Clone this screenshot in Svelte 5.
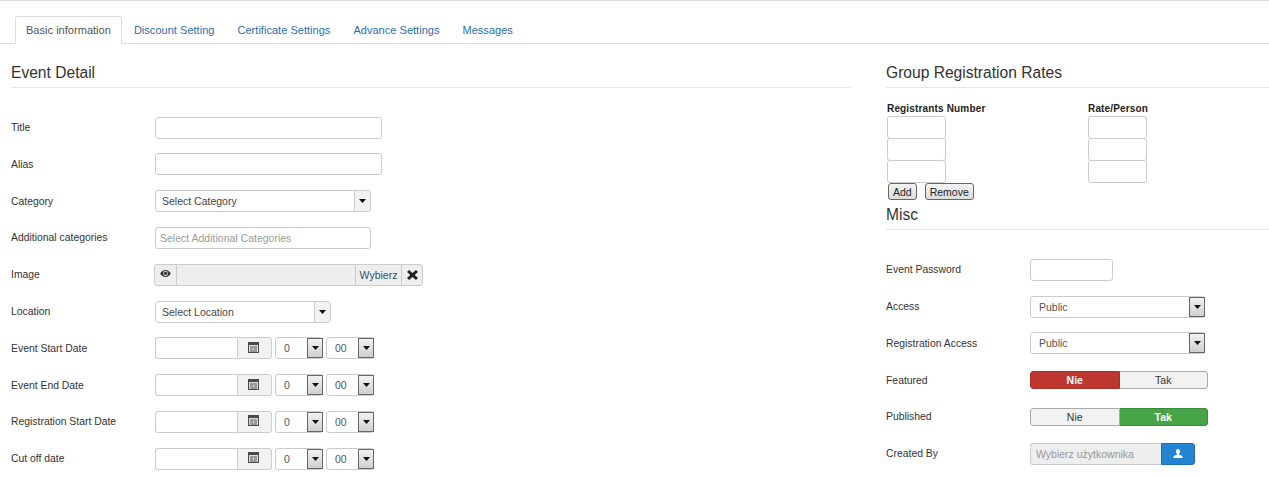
<script>
	const tabs = ["Basic information", "Discount Setting", "Certificate Settings", "Advance Settings", "Messages"];
	const dateRows = ["Event Start Date", "Event End Date", "Registration Start Date", "Cut off date"];
</script>

{#snippet arrow()}
	<svg class="caret" width="7" height="4" viewBox="0 0 7 4"><path d="M0 0h7L3.500 4z" fill="#111" /></svg>
{/snippet}

<div class="page">
	<ul class="tabs">
		{#each tabs as tab, i}
			<li class="tab" class:active={i === 0}>{tab}</li>
		{/each}
	</ul>

	<div class="columns">
		<section class="left">
			<h3>Event Detail</h3>
			<div class="form">
				<div class="row">
					<span class="label">Title</span>
					<input class="text w227" />
				</div>
				<div class="row">
					<span class="label">Alias</span>
					<input class="text w227" />
				</div>
				<div class="row">
					<span class="label">Category</span>
					<div class="combo w216">
						<span class="combo-text">Select Category</span>
						<span class="combo-btn">{@render arrow()}</span>
					</div>
				</div>
				<div class="row">
					<span class="label">Additional categories</span>
					<div class="tags w216">Select Additional Categories</div>
				</div>
				<div class="row">
					<span class="label">Image</span>
					<div class="media">
						<span class="add-on eye">
							<svg width="11" height="7" viewBox="0 0 12 8"><path fill="#333" fill-rule="evenodd" d="M6 0C3.400 0 1.300 1.500 0 4c1.300 2.500 3.400 4 6 4s4.700-1.500 6-4C10.700 1.500 8.600 0 6 0zm0 1.200a2.800 2.800 0 1 1 0 5.600 2.800 2.800 0 0 1 0-5.600z" /><circle cx="6" cy="3.800" r="1.900" fill="#333" /></svg>
						</span>
						<span class="media-path"></span>
						<span class="add-on pick">Wybierz</span>
						<span class="add-on clear">
							<svg width="11" height="10" viewBox="0 0 12 11"><path fill="#222" d="M0 2.200 2.200 0 6 3.300 9.800 0 12 2.200 8.500 5.500 12 8.800 9.800 11 6 7.700 2.200 11 0 8.800 3.500 5.500z" /></svg>
						</span>
					</div>
				</div>
				<div class="row">
					<span class="label">Location</span>
					<div class="combo w176">
						<span class="combo-text">Select Location</span>
						<span class="combo-btn">{@render arrow()}</span>
					</div>
				</div>
				{#each dateRows as name}
					<div class="row">
						<span class="label">{name}</span>
						<div class="date">
							<input class="date-input" />
							<span class="date-btn">
								<svg class="cal" width="11" height="11" viewBox="0 0 11 11"><rect width="11" height="11" fill="#4a4a4a" /><rect x="1" y="3" width="9" height="7" fill="#ddd" /><path d="M2 5h7M2 7h3M6 7h3M2 9h7" stroke="#555" /></svg>
							</span>
						</div>
						<div class="mini hour">
							<span class="mini-text">0</span>
							<span class="native">{@render arrow()}</span>
						</div>
						<div class="mini minute">
							<span class="mini-text">00</span>
							<span class="native">{@render arrow()}</span>
						</div>
					</div>
				{/each}
			</div>
		</section>

		<section class="right">
			<h3>Group Registration Rates</h3>
			<div class="rates">
				<div class="rate-col first">
					<b>Registrants Number</b>
					<input class="rate" /><input class="rate" /><input class="rate" />
					<div class="rate-actions">
						<button class="plain">Add</button>
						<button class="plain">Remove</button>
					</div>
				</div>
				<div class="rate-col">
					<b>Rate/Person</b>
					<input class="rate" /><input class="rate" /><input class="rate" />
				</div>
			</div>
			<h3 class="misc">Misc</h3>
			<div class="misc-form">
				<div class="row">
					<span class="label side">Event Password</span>
					<input class="text w83" />
				</div>
				<div class="row">
					<span class="label side">Access</span>
					<div class="select-box">
						<span class="mini-text">Public</span>
						<span class="native">{@render arrow()}</span>
					</div>
				</div>
				<div class="row">
					<span class="label side">Registration Access</span>
					<div class="select-box">
						<span class="mini-text">Public</span>
						<span class="native">{@render arrow()}</span>
					</div>
				</div>
				<div class="row">
					<span class="label side">Featured</span>
					<div class="toggle">
						<span class="opt red">Nie</span>
						<span class="opt">Tak</span>
					</div>
				</div>
				<div class="row">
					<span class="label side">Published</span>
					<div class="toggle">
						<span class="opt">Nie</span>
						<span class="opt green">Tak</span>
					</div>
				</div>
				<div class="row">
					<span class="label side">Created By</span>
					<div class="user">
						<span class="user-name">Wybierz użytkownika</span>
						<span class="user-btn">
							<svg width="10" height="9" viewBox="0 0 11 11"><path fill="#fff" d="M5.500 0C7.200 0 8 1.300 8 3c0 1.400-.6 2.500-1.300 3v.9c1.400.4 4.300 1 4.300 2.600V11H0V9.500c0-1.600 2.900-2.200 4.300-2.600V6C3.600 5.500 3 4.400 3 3c0-1.700.8-3 2.500-3z" /></svg>
						</span>
					</div>
				</div>
			</div>
		</section>
	</div>
</div>

<style>
	:global(body) {
		margin: 0;
		background: #fff;
	}

	.page {
		height: 478px;
		overflow: hidden;
		border-top: 1px solid #ddd;
		box-sizing: border-box;
		font-family: "Liberation Sans", Arial, sans-serif;
		font-size: 11px;
		color: #333;
	}

	.tabs {
		display: flex;
		list-style: none;
		margin: 15px 0 0;
		padding: 0 0 0 15px;
		height: 27px;
		border-bottom: 1px solid #ddd;
	}

	.tab {
		padding: 6px 10.500px 0;
		height: 21px;
		font-size: 11px;
		line-height: 14px;
		letter-spacing: 0.03px;
		color: #2a6db0;
		border: 1px solid transparent;
		border-bottom: 0;
	}

	.tab.active {
		color: #555;
		background: #fff;
		border-color: #ddd;
		border-radius: 3px 3px 0 0;
		margin-bottom: -1px;
		padding-left: 10px;
		padding-right: 10px;
		margin-right: 0.500px;
	}

	.columns {
		display: flex;
		align-items: flex-start;
	}

	.left {
		width: 840px;
		margin-left: 11px;
	}

	.right {
		width: 383px;
		margin-left: 35px;
	}

	h3 {
		margin: 19px 0 0;
		height: 24px;
		font-size: 15.600px;
		font-weight: 400;
		line-height: 19px;
		color: #333;
		border-bottom: 1px solid #e5e5e5;
	}

	.form {
		margin-top: 28.600px;
	}

	.row {
		display: flex;
		align-items: center;
		height: 22px;
		margin-bottom: 14.800px;
	}

	.label {
		width: 144px;
		flex: none;
		font-size: 10.400px;
	}

	input {
		box-sizing: border-box;
		background: #fff;
		border: 1px solid #ccc;
		border-radius: 3px;
		margin: 0;
		padding: 0;
		display: block;
	}

	.text {
		height: 22px;
	}

	.w227 {
		width: 227px;
	}

	.w83 {
		width: 83px;
	}

	.combo {
		box-sizing: border-box;
		height: 22px;
		display: flex;
		border: 1px solid #ccc;
		border-radius: 3px;
		background: #fff;
	}

	.w216 {
		width: 216px;
	}

	.w176 {
		width: 176px;
	}

	.combo-text {
		flex: 1;
		padding-left: 6px;
		line-height: 20px;
		font-size: 10.500px;
		color: #444;
	}

	.combo-btn {
		width: 15px;
		display: flex;
		align-items: center;
		justify-content: center;
		background: #f2f2f2;
		border-left: 1px solid #ccc;
		border-radius: 0 3px 3px 0;
	}

	.tags {
		box-sizing: border-box;
		height: 22px;
		padding-left: 4px;
		line-height: 20px;
		font-size: 10.500px;
		color: #999;
		border: 1px solid #ccc;
		border-radius: 3px;
	}

	.media {
		box-sizing: border-box;
		width: 269px;
		height: 22px;
		margin-left: -1px;
		display: flex;
		background: #eee;
		border: 1px solid #ccc;
		border-radius: 3px;
	}

	.add-on {
		display: flex;
		align-items: center;
		justify-content: center;
	}

	.eye {
		width: 22px;
		border-right: 1px solid #ccc;
		padding-bottom: 2px;
		box-sizing: border-box;
	}

	.media-path {
		flex: 1;
	}

	.pick {
		width: 45px;
		border-left: 1px solid #ccc;
		font-size: 10.500px;
		color: #33506b;
	}

	.clear {
		width: 20px;
		border-left: 1px solid #ccc;
	}

	.date {
		display: flex;
		width: 117px;
		height: 22px;
	}

	.date-input {
		width: 82px;
		height: 22px;
		border-radius: 3px 0 0 3px;
		border-right: 0;
	}

	.date-btn {
		box-sizing: border-box;
		width: 35px;
		display: flex;
		align-items: center;
		justify-content: center;
		background: #f2f2f2;
		border: 1px solid #ccc;
		border-radius: 0 3px 3px 0;
		padding: 0 2px 2px 0;
	}

	.mini,
	.select-box {
		box-sizing: border-box;
		height: 22px;
		display: flex;
		align-items: center;
		justify-content: space-between;
		background: #fff;
		border: 1px solid #ccc;
		border-radius: 3px;
	}

	.mini {
		width: 48px;
	}

	.hour,
	.minute {
		margin-left: 3px;
	}

	.mini-text {
		padding-left: 8px;
		font-size: 10.500px;
		color: #555;
	}

	.native {
		box-sizing: border-box;
		width: 16px;
		height: 20px;
		display: flex;
		align-items: center;
		justify-content: center;
		border: 1px solid #666;
		background: linear-gradient(#f2f2f2, #cfcfcf);
		margin-right: -1px;
	}

	.select-box {
		width: 175px;
	}

	.rates {
		display: flex;
		margin: 14px 0 0 1px;
		font-size: 10px;
		color: #222;
	}

	.rate-col {
		display: flex;
		flex-direction: column;
		align-items: flex-start;
	}

	.rate-col.first {
		width: 201px;
	}

	.rate-col b {
		line-height: 13px;
		margin-bottom: 1px;
		letter-spacing: 0.160px;
	}

	.rate {
		width: 59px;
		height: 23px;
		margin-bottom: -1px;
	}

	.rate-actions {
		display: flex;
		gap: 8px;
		margin: 1px 0 0 1px;
	}

	.plain {
		height: 17px;
		padding: 0 4px;
		font: 10.500px "Liberation Sans", Arial, sans-serif;
		color: #222;
		background: linear-gradient(#f4f4f4, #ddd);
		border: 1px solid #666;
		border-radius: 3px;
	}

	h3.misc {
		margin-top: 5px;
	}

	.misc-form {
		margin-top: 28.800px;
	}

	.toggle {
		box-sizing: border-box;
		width: 178px;
		height: 18px;
		display: flex;
		border-radius: 3px;
		overflow: hidden;
	}

	.opt {
		box-sizing: border-box;
		flex: 1;
		text-align: center;
		font-size: 10.500px;
		line-height: 16px;
		color: #333;
		background: #f2f2f2;
		border: 1px solid #aaa;
	}

	.opt + .opt {
		border-left: 0;
	}

	.opt:first-child {
		border-radius: 3px 0 0 3px;
	}

	.opt:last-child {
		border-radius: 0 3px 3px 0;
	}

	.red {
		color: #fff;
		font-weight: 700;
		background: #bd362f;
		border-color: #a9302a;
	}

	.green {
		color: #fff;
		font-weight: 700;
		background: #46a546;
		border-color: #3b8b3b;
	}

	.user {
		display: flex;
		height: 22px;
	}

	.user-name {
		box-sizing: border-box;
		width: 131px;
		padding-left: 5px;
		line-height: 20px;
		font-size: 10.500px;
		color: #999;
		background: #eee;
		border: 1px solid #ccc;
		border-right: 0;
		border-radius: 3px 0 0 3px;
	}

	.user-btn {
		box-sizing: border-box;
		width: 34px;
		display: flex;
		align-items: center;
		justify-content: center;
		background: #2384d3;
		border: 1px solid #1d6fb2;
		border-radius: 0 3px 3px 0;
	}
</style>
